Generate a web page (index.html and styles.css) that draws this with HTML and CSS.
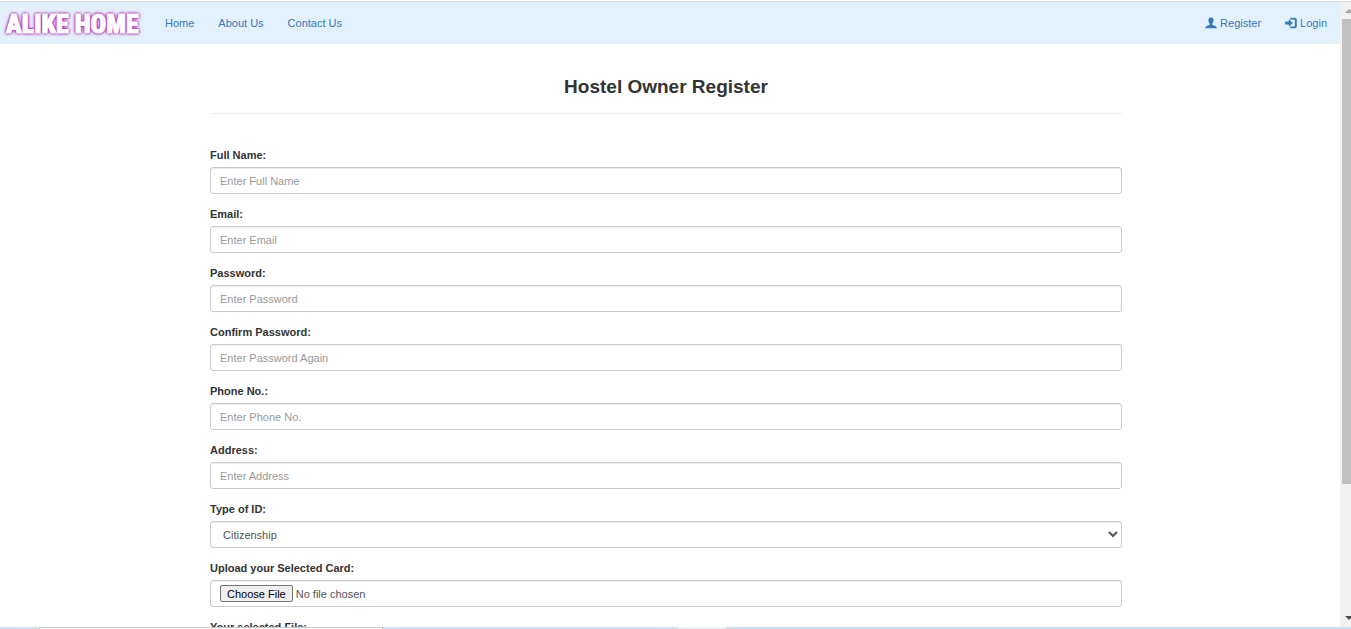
FILE: index.html
```html
<!DOCTYPE html>
<html lang="en">
<head>
<meta charset="utf-8">
<title>Hostel Owner Register</title>
<link rel="stylesheet" href="styles.css">
</head>
<body>
<div class="viewport">
  <div class="page">
    <nav class="navbar">
      <a class="brand" href="#">ALIKE HOME</a>
      <div class="nav-links">
        <a href="#">Home</a>
        <a href="#">About Us</a>
        <a href="#">Contact Us</a>
      </div>
      <div class="nav-links nav-account">
        <a href="#"><svg class="icon" viewBox="0 0 12 12" aria-hidden="true"><path d="M6 0.4C7.8 0.4 8.7 1.6 8.6 3.2C8.6 4.7 8 5.9 7.3 6.7V7.8C8.2 8.7 11.4 8.9 11.7 10.6V11.3H0.3V10.6C0.6 8.9 3.8 8.7 4.7 7.8V6.7C4 5.9 3.4 4.7 3.4 3.2C3.3 1.6 4.2 0.4 6 0.4Z"/></svg>Register</a>
        <a href="#"><svg class="icon" viewBox="0 0 12 12" aria-hidden="true"><path d="M0.2 4.6H3.8V2.3L7.8 6L3.8 9.7V7.4H0.2ZM5.2 0.8H9.9Q11.8 0.8 11.8 2.7V9.3Q11.8 11.2 9.9 11.2H5.2V9.5H9.1Q9.8 9.5 9.8 8.8V3.2Q9.8 2.5 9.1 2.5H5.2Z"/></svg>Login</a>
      </div>
    </nav>
    <main class="content">
      <form class="register">
        <h1>Hostel Owner Register</h1>
        <hr>
        <div class="field"><label for="name">Full Name:</label><input class="control" id="name" type="text" placeholder="Enter Full Name"></div>
        <div class="field"><label for="email">Email:</label><input class="control" id="email" type="email" placeholder="Enter Email"></div>
        <div class="field"><label for="pwd">Password:</label><input class="control" id="pwd" type="password" placeholder="Enter Password"></div>
        <div class="field"><label for="pwd2">Confirm Password:</label><input class="control" id="pwd2" type="password" placeholder="Enter Password Again"></div>
        <div class="field"><label for="phone">Phone No.:</label><input class="control" id="phone" type="text" placeholder="Enter Phone No."></div>
        <div class="field"><label for="address">Address:</label><input class="control" id="address" type="text" placeholder="Enter Address"></div>
        <div class="field"><label for="idtype">Type of ID:</label><select class="control" id="idtype"><option>Citizenship</option></select></div>
        <div class="field"><label for="card">Upload your Selected Card:</label><input class="control file" id="card" type="file"></div>
        <div class="field"><label for="preview">Your selected File:</label><output id="preview"></output></div>
      </form>
    </main>
  </div>
  <div class="scroll-gutter" aria-hidden="true">
    <div class="scrollbar">
      <svg class="arrow up" viewBox="0 0 8 4"><path d="M4 0L8 4H0Z"/></svg>
      <div class="track"><div class="thumb"></div></div>
      <svg class="arrow down" viewBox="0 0 8 4"><path d="M0 0H8L4 4Z"/></svg>
    </div>
  </div>
</div>
<div class="taskbar" aria-hidden="true">
  <span class="task-start"></span><span class="task-search"></span><span class="task-pins"></span><span class="task-active"></span><span class="task-rest"></span>
</div>
</body>
</html>
```
FILE: styles.css
```css
* { box-sizing: border-box; }

body {
  margin: 0;
  height: 100vh;
  display: flex;
  flex-direction: column;
  overflow: hidden;
  background: #fff;
  color: #333;
  font: 11px/16px "Liberation Sans", Arial, sans-serif;
}

.viewport {
  flex: 1;
  min-height: 0;
  display: flex;
  margin-top: 1px;
  border-top: 1px solid #d4dce2;
}

.page {
  flex: 1;
  min-width: 0;
  overflow: hidden;
}

.navbar {
  display: flex;
  align-items: center;
  height: 42px;
  padding: 0 1px 0 6px;
  background: #e3f1fc;
  border-radius: 0 0 3px 0;
}

.brand {
  width: 147px;
  padding-top: 2px;
  color: #fff;
  font: 900 26px/40px Impact, "Roboto Condensed", Roboto, sans-serif;
  white-space: nowrap;
  text-decoration: none;
  -webkit-text-stroke: 1px #fff;
  text-shadow: 0 0 1px #b422b4, 0 0 2px #b422b4, 0 0 2px #b422b4, 0 0 3px #b422b4, 0 0 3px #b422b4, 0 0 4px #c65cc8;
}

.nav-links {
  display: flex;
}

.nav-links a {
  display: flex;
  align-items: center;
  gap: 3px;
  padding: 0 12px;
  color: #337ab7;
  text-decoration: none;
}

.nav-account {
  margin-left: auto;
}

.icon {
  width: 12px;
  height: 12px;
  fill: currentColor;
}

.content {
  padding: 32px 8px 0 0;
}

.register {
  width: 69%;
  max-width: 912px;
  min-width: 300px;
  margin: 0 auto;
}

h1 {
  margin: 0;
  font-size: 19px;
  line-height: 22px;
  text-align: center;
}

hr {
  margin: 15px 0 33px;
  border: 0;
  border-top: 1px solid #eee;
}

.field {
  margin-bottom: 12px;
}

.field label {
  display: block;
  margin-bottom: 4px;
  font-weight: bold;
}

.control {
  display: block;
  width: 100%;
  height: 27px;
  padding: 4px 9px;
  border: 1px solid #ccc;
  border-radius: 3px;
  background: #fff;
  box-shadow: inset 0 1px 1px rgba(0, 0, 0, 0.075);
  color: #555;
  font: inherit;
}

select.control {
  padding: 4px 0 4px 8px;
}

.control::placeholder {
  color: #999;
}

.file::file-selector-button {
  height: 17px;
  margin-right: 3px;
  padding: 0 6px;
  border: 1px solid #767676;
  border-radius: 2px;
  background: #efefef;
  color: #000;
  font: inherit;
}

.scroll-gutter {
  width: 11px;
  overflow: hidden;
}

.scrollbar {
  display: flex;
  flex-direction: column;
  align-items: center;
  width: 17px;
  height: 100%;
  padding: 7px 0;
  background: #f1f1f1;
}

.arrow {
  width: 8px;
  height: 4px;
}

.up { fill: #a3a3a3; }
.down { fill: #505050; }

.track {
  flex: 1;
  width: 13px;
  padding: 6px 0 8px;
}

.thumb {
  height: 79%;
  background: #c1c1c1;
}

.taskbar {
  display: flex;
  height: 2px;
  background: #cfe4ef;
}

.task-start { width: 39px; }

.task-search {
  width: 344px;
  border: 1px solid #c4c8ca;
  border-bottom: 0;
  background: #fff;
}

.task-pins { width: 295px; }

.task-active {
  width: 48px;
  background: #ebf2f6;
}

.task-rest {
  flex: 1;
  background: #cddded;
}
```
